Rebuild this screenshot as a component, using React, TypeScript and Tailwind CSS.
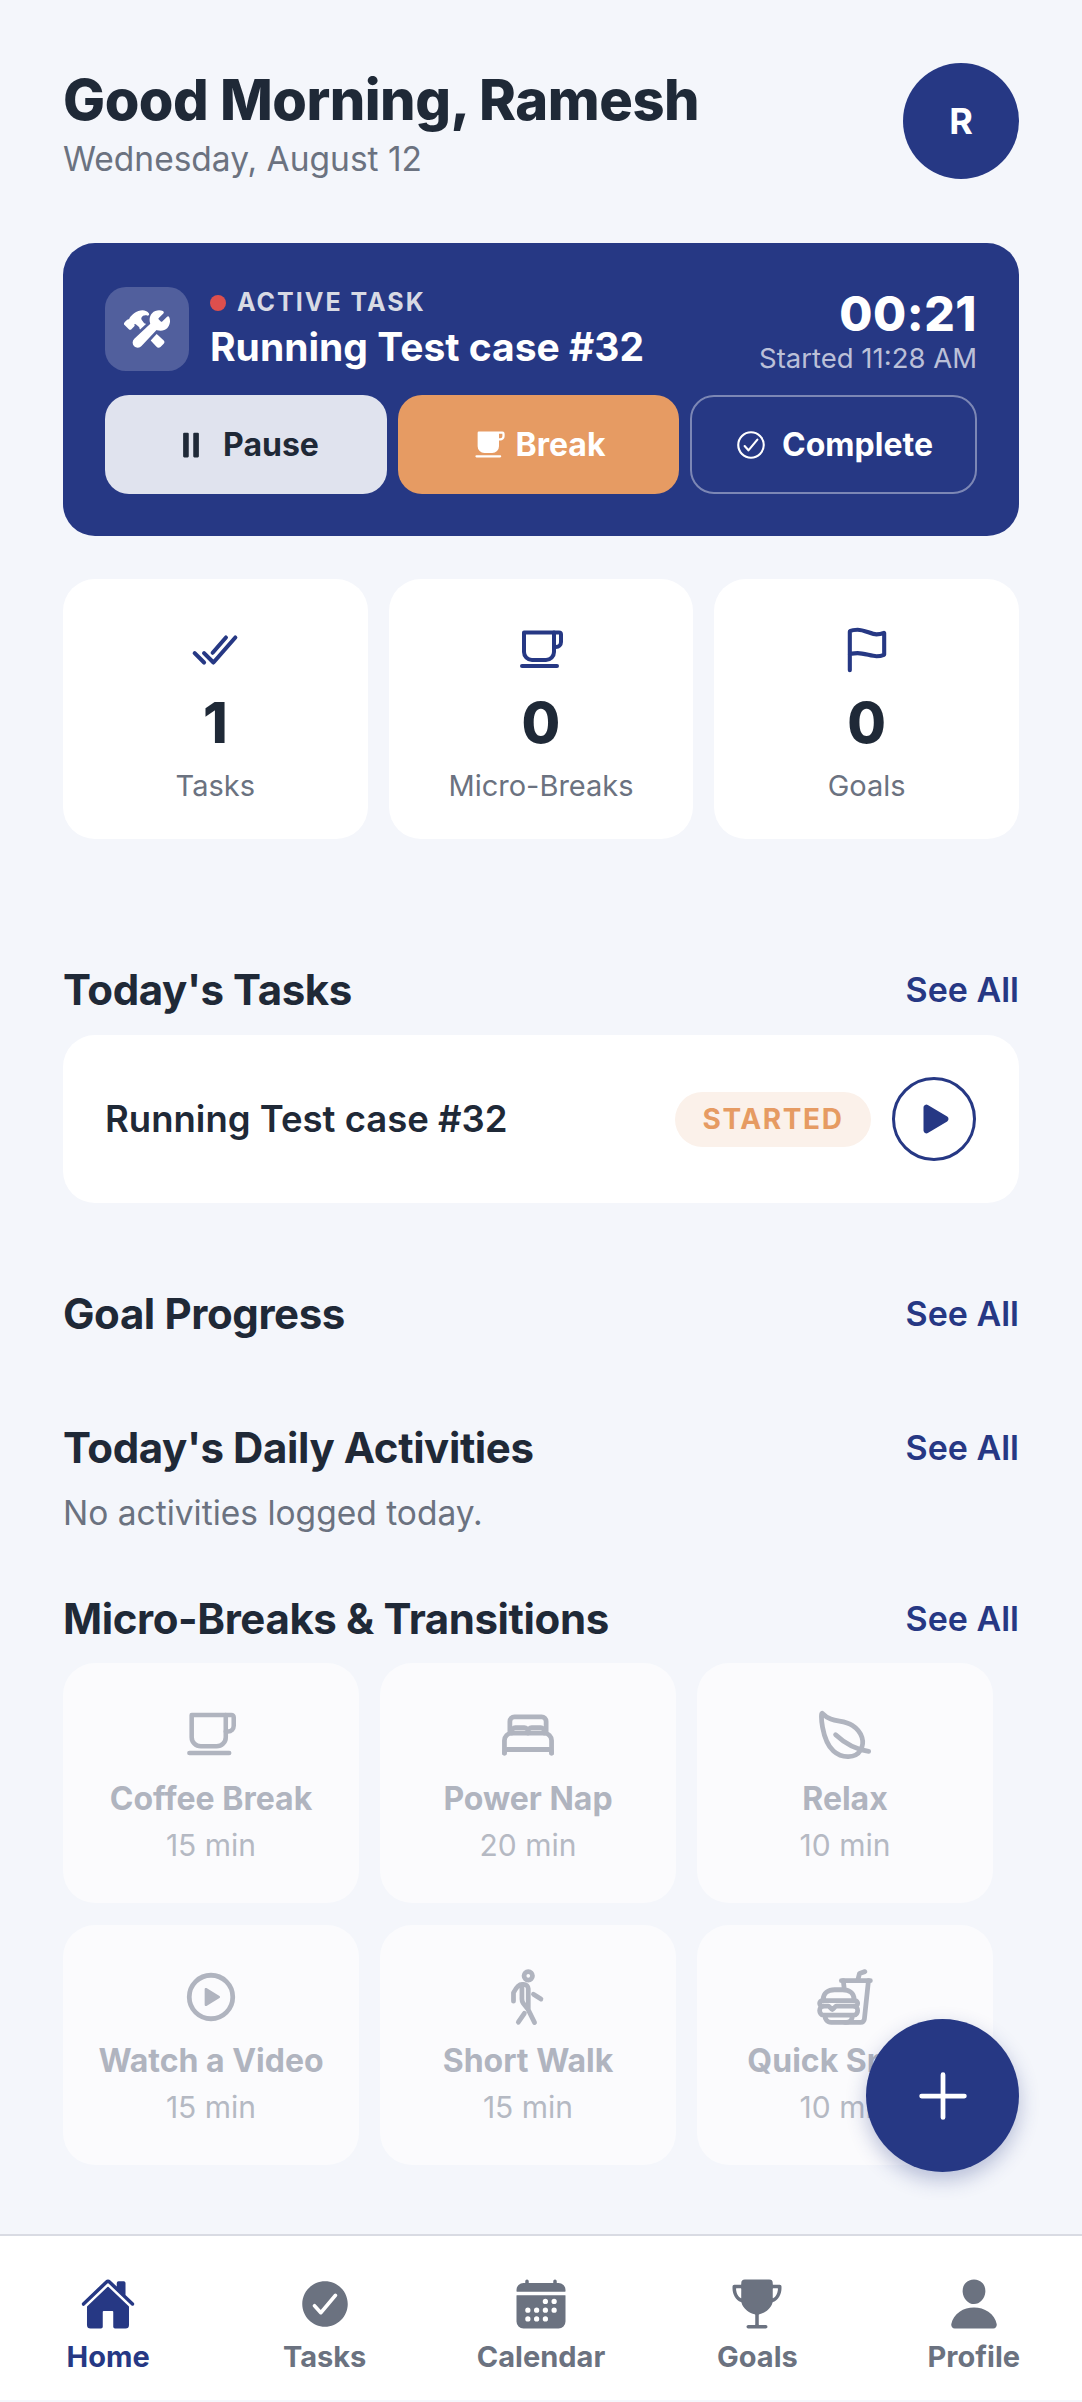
// Home screen — greeting, active task, stats, sections and bottom tabs
import type { ReactNode } from "react"
import {
  IoAdd,
  IoBedOutline,
  IoCafe,
  IoCalendar,
  IoCheckmarkCircle,
  IoCheckmarkCircleOutline,
  IoCheckmarkDoneOutline,
  IoConstruct,
  IoFastFoodOutline,
  IoFlagOutline,
  IoHome,
  IoLeafOutline,
  IoPause,
  IoPerson,
  IoPlay,
  IoPlayCircleOutline,
  IoTrophy,
  IoWalkOutline,
} from "react-icons/io5"

// outline icons in the picture are a bit heavier than the package default
const heavy = "[&_[stroke-width='32']]:[stroke-width:42px]"

function CupIcon({ width }: { width: number }) {
  return (
    <svg viewBox="0 0 44 40" width={width} className="-mt-[3px]" fill="none" stroke="currentColor" strokeWidth="4" strokeLinecap="round" strokeLinejoin="round">
      <path d="M5 3.5H35V23a8 8 0 0 1-8 8H13a8 8 0 0 1-8-8Z" />
      <path d="M35 3.5h5a2 2 0 0 1 2 2V13a5 5 0 0 1-5 5h-2" />
      <path d="M3 37H38" />
    </svg>
  )
}

const stats = [
  { icon: <IoCheckmarkDoneOutline size={50} className={heavy} />, value: "1", label: "Tasks" },
  { icon: <CupIcon width={44} />, value: "0", label: "Micro-Breaks" },
  { icon: <IoFlagOutline size={50} className={heavy} />, value: "0", label: "Goals" },
]

const breaks = [
  { icon: <CupIcon width={50} />, label: "Coffee Break", time: "15 min" },
  { icon: <IoBedOutline size={58} className={heavy} />, label: "Power Nap", time: "20 min" },
  { icon: <IoLeafOutline size={58} className={heavy} />, label: "Relax", time: "10 min" },
  { icon: <IoPlayCircleOutline size={58} className={heavy} />, label: "Watch a Video", time: "15 min" },
  { icon: <IoWalkOutline size={58} className={heavy} />, label: "Short Walk", time: "15 min" },
  { icon: <IoFastFoodOutline size={58} className={heavy} />, label: "Quick Snack", time: "10 min" },
]

const tabs = [
  { icon: <IoHome size={56} />, label: "Home", active: true },
  { icon: <IoCheckmarkCircle size={56} />, label: "Tasks" },
  { icon: <IoCalendar size={56} />, label: "Calendar" },
  { icon: <IoTrophy size={56} />, label: "Goals" },
  { icon: <IoPerson size={56} />, label: "Profile" },
]

function SectionHeader({ title, className }: { title: string; className?: string }) {
  return (
    <div className={`flex items-center justify-between h-[46px] ${className ?? ""}`}>
      <h2 className="text-[42px] font-bold tracking-[-0.4px] text-[#1f2937]">{title}</h2>
      <span className="text-[34px] font-semibold text-[#263884]">See All</span>
    </div>
  )
}

function ActionButton({ className, children }: { className: string; children: ReactNode }) {
  return (
    <div className={`h-[99px] rounded-[24px] flex items-center justify-center text-[32px] font-bold ${className}`}>
      {children}
    </div>
  )
}

export default function App() {
  return (
    <div
      className="relative h-[2402px] flex flex-col bg-[#f4f6fb] overflow-hidden"
      style={{ fontFamily: "Inter, sans-serif" }}
    >
      <main className="flex-1 overflow-hidden px-[63px] pt-[63px]">
        <header className="flex justify-between h-[116px]">
          <div>
            <h1 className="text-[56px] leading-[74px] font-extrabold tracking-[-0.5px] text-[#1f2937]">Good Morning, Ramesh</h1>
            <p className="text-[33.5px] leading-[44px] text-[#6b7280]">Wednesday, August 12</p>
          </div>
          <div className="w-[116px] h-[116px] rounded-full bg-[#263884] text-white flex items-center justify-center text-[36px] font-bold">
            R
          </div>
        </header>

        <section className="mt-[64px] h-[293px] rounded-[32px] bg-[#263884] px-[42px] pt-[44px]">
          <div className="flex justify-between h-[84px]">
            <div className="flex gap-[21px]">
              <div className="w-[84px] h-[84px] rounded-[21px] bg-[#515f9d] flex items-center justify-center text-white">
                <IoConstruct size={46} />
              </div>
              <div>
                <div className="flex items-center gap-[11px] h-[32px]">
                  <span className="w-[16px] h-[16px] rounded-full bg-[#dd4f4d]" />
                  <span className="text-[25px] font-bold tracking-[2px] text-[#d8dae4]">ACTIVE TASK</span>
                </div>
                <div className="text-[39px] leading-[56px] font-bold text-white">Running Test case #32</div>
              </div>
            </div>
            <div className="text-right -mt-[2px]">
              <div className="text-[48px] leading-[57px] font-extrabold tracking-[0.5px] text-white">00:21</div>
              <div className="text-[27.5px] leading-[32px] text-white/70">Started 11:28 AM</div>
            </div>
          </div>
          <div className="mt-[24px] flex gap-[11px]">
            <ActionButton className="w-[282px] bg-[#e0e3ee] text-[#1f2937] gap-[14px]">
              <IoPause size={36} />
              Pause
            </ActionButton>
            <ActionButton className="w-[281px] bg-[#e69b63] text-white gap-[8px]">
              <IoCafe size={36} />
              Break
            </ActionButton>
            <ActionButton className="flex-1 border-2 border-white/40 text-white gap-[14px]">
              <IoCheckmarkCircleOutline size={34} />
              Complete
            </ActionButton>
          </div>
        </section>

        <section className="mt-[43px] grid grid-cols-3 gap-[21px]">
          {stats.map((s) => (
            <div key={s.label} className="h-[260px] rounded-[32px] bg-white flex flex-col items-center pt-[43px]">
              <div className="h-[56px] flex items-center text-[#263884]">{s.icon}</div>
              <div className="mt-[11px] text-[56px] leading-[68px] font-extrabold text-[#1f2937]">{s.value}</div>
              <div className="mt-[9px] text-[29px] leading-[40px] text-[#6b7280]">{s.label}</div>
            </div>
          ))}
        </section>

        <SectionHeader title="Today's Tasks" className="mt-[127px]" />
        <section className="mt-[23px] h-[168px] rounded-[32px] bg-white flex items-center justify-between pl-[42px] pr-[43px]">
          <span className="text-[36.5px] font-semibold text-[#1f2937]">Running Test case #32</span>
          <div className="flex items-center gap-[21px]">
            <span className="w-[196px] h-[55px] rounded-full bg-[#fbf1ea] flex items-center justify-center text-[28px] font-bold tracking-[1.6px] text-[#e69b63]">
              STARTED
            </span>
            <div className="w-[84px] h-[84px] rounded-full border-[3px] border-[#263884] flex items-center justify-center pl-[4px] text-[#263884]">
              <IoPlay size={40} />
            </div>
          </div>
        </section>

        <SectionHeader title="Goal Progress" className="mt-[87px]" />
        <SectionHeader title="Today's Daily Activities" className="mt-[88px]" />
        <p className="mt-[21px] text-[33.5px] leading-[44px] text-[#6b7280]">No activities logged today.</p>
        <SectionHeader title="Micro-Breaks & Transitions" className="mt-[60px]" />

        <section className="mt-[22px] grid grid-cols-3 gap-x-[21px] gap-y-[22px] w-[930px]">
          {breaks.map((b) => (
            <div key={b.label} className="h-[240px] rounded-[32px] bg-white/60 flex flex-col items-center pt-[42px]">
              <div className="h-[60px] flex items-center text-[#b0b4bf]">{b.icon}</div>
              <div className="mt-[12px] text-[32px] leading-[44px] font-bold text-[#b0b4bf]">{b.label}</div>
              <div className="mt-[4px] text-[30px] leading-[40px] text-[#b5b9c3]">{b.time}</div>
            </div>
          ))}
        </section>
      </main>

      <button className="absolute left-[866px] top-[2019px] w-[153px] h-[153px] rounded-full bg-[#263884] text-white flex items-center justify-center shadow-[0_8px_20px_rgba(38,56,132,0.3)]">
        <IoAdd size={76} />
      </button>

      <nav className="h-[166px] mb-[2px] bg-white border-t-2 border-[#d9dbe3] grid grid-cols-5 pt-[40px]">
        {tabs.map((t) => (
          <div key={t.label} className={`flex flex-col items-center ${t.active ? "text-[#263884]" : "text-[#6b7280]"}`}>
            {t.icon}
            <span className="mt-[7px] text-[29px] leading-[36px] font-bold">{t.label}</span>
          </div>
        ))}
      </nav>
    </div>
  )
}
